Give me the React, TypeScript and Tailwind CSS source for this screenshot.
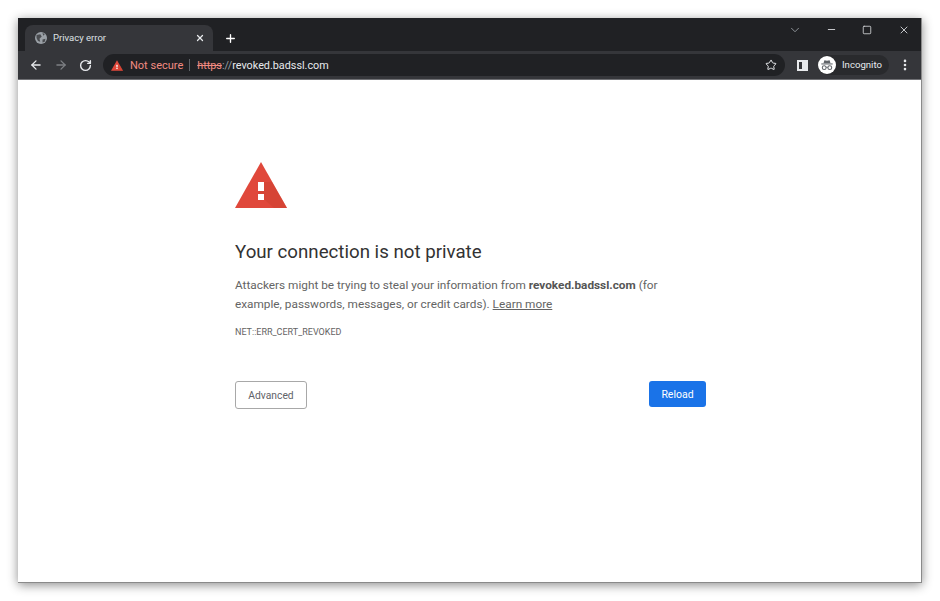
import React from 'react';
import { ArrowLeft, ArrowRight, RotateCw, Star, Plus, X, ChevronDown, Minus, Square, MoreVertical } from 'lucide-react';

const WarnIcon = ({ className }: { className: string }) => (
  <svg className={className} viewBox="0 0 52 46">
    <path d="M26 0 L52 46 H0 Z" fill="#e0483b" />
    <path d="M29 20 L37 20 L44 32 L52 46 H39 L23 32 Z" fill="#c9402f" opacity="0.45" />
    <rect x="23" y="20" width="6" height="9" fill="#fff" />
    <rect x="23" y="32" width="6" height="6" fill="#fff" />
  </svg>
);

const Globe = () => (
  <svg className="w-[12px] h-[12px]" viewBox="0 0 16 16">
    <circle cx="8" cy="8" r="8" fill="#9aa0a6" />
    <path d="M2 4 L7 3 L9 6 L6 9 L7 13 L4 12 L2 8 Z M10 10 L14 9 L13 13 L10 14 Z M10 1 L13 3 L11 5 Z" fill="#4a4c50" />
  </svg>
);

const IncognitoIcon = () => (
  <svg className="w-[14px] h-[14px]" viewBox="0 0 16 16">
    <path d="M4 6 L5 2.5 L8 3.2 L11 2.5 L12 6 Z" fill="#5f6368" />
    <rect x="1.5" y="6.2" width="13" height="1.2" fill="#5f6368" />
    <circle cx="4.8" cy="11" r="2.2" fill="none" stroke="#5f6368" strokeWidth="1.2" />
    <circle cx="11.2" cy="11" r="2.2" fill="none" stroke="#5f6368" strokeWidth="1.2" />
    <path d="M7 10.6 H9" stroke="#5f6368" strokeWidth="1" />
  </svg>
);

const App: React.FC = () => {
  return (
    <div className="w-[940px] h-[601px] overflow-hidden bg-white pt-[18px] pl-[18px] font-['Roboto','Open_Sans',sans-serif]">
      <div className="w-[904px] h-[565px] flex flex-col bg-white border-r border-b border-[#8a8a8a] shadow-[0_2px_10px_rgba(0,0,0,0.45)]">
        {/* tab strip */}
        <div className="h-[33px] bg-[#202124] flex items-end pl-[7px]">
          <div className="w-[188px] h-[26px] bg-[#35363a] rounded-t-lg flex items-center pl-[10px] pr-[8px]">
            <Globe />
            <span className="ml-[6px] pt-px text-[9.5px] text-[#dfe1e5]">Privacy error</span>
            <X className="ml-auto w-[10px] h-[10px] text-[#e8eaed]" strokeWidth={3} />
          </div>
          <Plus className="ml-[11px] mb-[6px] w-[13px] h-[13px] text-white" strokeWidth={2.5} />
          <div className="ml-auto self-start flex items-center h-[23px] text-[#d5d7da]">
            <ChevronDown className="w-[14px] h-[14px] mr-[24px] text-[#9aa0a6]" strokeWidth={1.5} />
            <Minus className="w-[11px] h-[11px] mr-[25px]" strokeWidth={2} />
            <Square className="w-[10px] h-[10px] mr-[26px]" strokeWidth={2} />
            <X className="w-[12px] h-[12px] mr-[11px]" strokeWidth={1.8} />
          </div>
        </div>
        {/* toolbar */}
        <div className="h-[29px] bg-[#35363a] flex items-center pl-[11px] border-b border-[#6f7074]">
          <ArrowLeft className="w-[14px] h-[14px] text-[#e8eaed]" strokeWidth={2.2} />
          <ArrowRight className="ml-[11px] w-[14px] h-[14px] text-[#7d8084]" strokeWidth={2.2} />
          <RotateCw className="ml-[11px] w-[13px] h-[13px] text-[#e8eaed]" strokeWidth={2.6} />
          <div className="ml-[11px] w-[682px] h-[22px] rounded-full bg-[#202124] flex items-center pl-[8px] pr-[8px]">
            <WarnIcon className="w-[12px] h-[11px]" />
            <span className="ml-[7px] pt-[2px] text-[11px] text-[#f28b82]">Not secure</span>
            <span className="ml-[6px] w-px h-[12px] bg-[#5f6368]" />
            <span className="ml-[7px] pt-[2px] text-[10.8px] text-[#f28b82] line-through">https</span>
            <span className="pt-[2px] text-[10.8px] text-[#9aa0a6]">://</span>
            <span className="pt-[2px] text-[10.8px] text-[#e8eaed]">revoked.badssl.com</span>
            <Star className="ml-auto w-[12px] h-[12px] text-[#e8eaed]" strokeWidth={2} />
          </div>
          <div className="ml-[12px] w-[11px] h-[11px] border-2 border-[#e8eaed] flex justify-end">
            <div className="w-[4px] bg-[#e8eaed]" />
          </div>
          <div className="ml-[10px] w-[71px] h-[20px] rounded-full bg-[#292a2d] flex items-center">
            <div className="w-[18px] h-[18px] rounded-full bg-white flex items-center justify-center">
              <IncognitoIcon />
            </div>
            <span className="ml-[6px] text-[9.6px] text-[#e8eaed]">Incognito</span>
          </div>
          <MoreVertical className="ml-[9px] w-[14px] h-[14px] text-[#e8eaed]" strokeWidth={2.5} />
        </div>
        {/* page */}
        <div className="flex-1 pl-[217px] pt-[82px]">
          <div className="w-[471px]">
            <WarnIcon className="w-[52px] h-[46px]" />
            <h1 className="mt-[30px] text-[18.7px] leading-[28px] font-normal text-[#333]">Your connection is not private</h1>
            <p className="mt-[10px] w-[440px] text-[11.8px] leading-[19px] text-[#646464]">
              Attackers might be trying to steal your information from <b className="text-[#555] font-bold">revoked.badssl.com</b> (for example, passwords, messages, or credit cards). <span className="underline">Learn more</span>
            </p>
            <div className="mt-[11px] text-[9px] leading-[14px] text-[#646464]">NET::ERR_CERT_REVOKED</div>
            <div className="mt-[42px] flex justify-between">
              <button className="w-[72px] h-[28px] pt-px rounded-[3px] border border-[#a8a8a8] bg-white text-[10.3px] text-[#5f6368]">Advanced</button>
              <button className="w-[57px] h-[26px] pt-px rounded-[3px] bg-[#1a73e8] text-[10.5px] text-white">Reload</button>
            </div>
          </div>
        </div>
      </div>
    </div>
  );
};

export default App;
